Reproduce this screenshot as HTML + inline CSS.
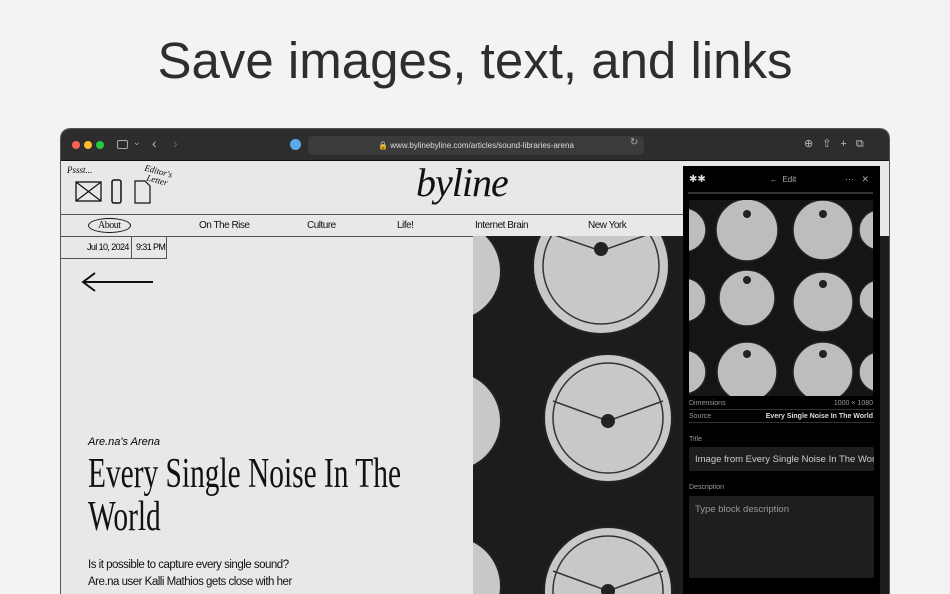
<!DOCTYPE html>
<html><head><meta charset="utf-8"><style>
*{margin:0;padding:0;box-sizing:border-box}
body{width:950px;height:594px;overflow:hidden;background:#f3f3f3;font-family:"Liberation Sans",sans-serif;position:relative}
.abs{position:absolute}
h1{position:absolute;top:31px;left:0;width:950px;text-align:center;font-weight:400;font-size:51px;color:#2e2e2e}
.win{left:61px;top:129px;width:828px;height:465px;background:#e8e8e8;border-radius:9px 9px 0 0;overflow:hidden;box-shadow:0 0 0 1px #555}
.bar{left:0;top:0;width:828px;height:32px;background:#2d2d2d;border-bottom:1px solid #111}
.dot{width:8px;height:8px;border-radius:50%;top:12px}
.url{left:247px;top:7px;width:336px;height:19px;background:#3b3b3b;border-radius:5px;color:#ddd;font-size:8px;text-align:center;line-height:19px}
.nav{top:85px;left:0;width:622px;height:23px;border-top:1px solid #555;border-bottom:1px solid #555;font-size:10px;letter-spacing:-.5px;color:#111}
.nav span{position:absolute;top:5px}
.panel{left:622px;top:37px;width:197px;height:428px;background:#000;color:#ccc}
.lbl{font-size:7px;color:#999}
</style></head><body>
<h1>Save images, text, and links</h1>
<div class="abs win">
 <div class="abs bar">
  <div class="abs dot" style="left:11px;background:#fe5f57"></div>
  <div class="abs dot" style="left:23px;background:#febc2e"></div>
  <div class="abs dot" style="left:35px;background:#28c840"></div>
  <div class="abs" style="left:56px;top:11px;width:11px;height:9px;border:1px solid #aaa;border-radius:2px"></div>
  <div class="abs" style="left:72px;top:8px;color:#aaa;font-size:9px">⌄</div>
  <div class="abs" style="left:91px;top:6px;color:#bbb;font-size:14px">‹</div>
  <div class="abs" style="left:112px;top:6px;color:#666;font-size:14px">›</div>
  <div class="abs" style="left:229px;top:10px;width:11px;height:11px;border-radius:50%;background:#5aa9ea"></div>
  <div class="abs url">🔒 www.bylinebyline.com/articles/sound-libraries-arena</div>
  <div class="abs" style="left:569px;top:8px;color:#aaa;font-size:10px">↻</div>
  <div class="abs" style="left:743px;top:8px;color:#bbb;font-size:11px;letter-spacing:9px">⊕⇧+⧉</div>
 </div>
 <div class="abs" style="left:6px;top:36px;font-size:9px;font-style:italic;font-family:'Liberation Serif',serif">Pssst...</div>
 <div class="abs" style="left:82px;top:38px;font-size:9px;font-style:italic;font-family:'Liberation Serif',serif;transform:rotate(15deg);line-height:9px">Editor's<br>&nbsp;&nbsp;Letter</div>
 <svg class="abs" style="left:14px;top:50px" width="100" height="26"><rect x="1" y="3" width="25" height="19" fill="none" stroke="#111" stroke-width="1.3"/><path d="M1 3 L26 22 M26 3 L1 22" stroke="#111" stroke-width="1.2"/><rect x="37" y="1" width="9" height="23" rx="2" fill="none" stroke="#111" stroke-width="1.5"/><path d="M60 2 h10 l5 5 v17 h-15 z" fill="none" stroke="#111" stroke-width="1.2"/></svg>
 <div class="abs" style="left:355px;top:30px;font-size:40px;font-style:italic;font-family:'Liberation Serif',serif;letter-spacing:-1px;color:#111">byline</div>
 <div class="abs nav">
  <span style="left:27px;top:3px;border:1px solid #111;border-radius:50%;padding:1px 9px;font-family:'Liberation Serif',serif">About</span>
  <span style="left:138px">On The Rise</span><span style="left:246px">Culture</span><span style="left:336px">Life!</span><span style="left:414px">Internet Brain</span><span style="left:527px">New York</span>
 </div>
 <div class="abs" style="left:0;top:108px;width:106px;height:22px;border-bottom:1px solid #555;border-right:1px solid #555;font-size:9px;letter-spacing:-.6px;white-space:nowrap">
  <span class="abs" style="left:26px;top:5px">Jul 10, 2024</span><span class="abs" style="left:70px;top:0;width:1px;height:22px;background:#555"></span><span class="abs" style="left:75px;top:5px">9:31 PM</span></div>
 <svg class="abs" style="left:20px;top:142px" width="75" height="22"><path d="M2 11 H72 M14 2 L2 11 L14 20" fill="none" stroke="#111" stroke-width="2"/></svg>
 <div class="abs" style="left:27px;top:307px;font-size:11px;font-style:italic">Are.na's Arena</div>
 <div class="abs" style="left:27px;top:324px;font-size:42px;line-height:43px;font-family:'Liberation Serif',serif;transform:scaleX(.7);transform-origin:0 0;width:560px;color:#111">Every Single Noise In The World</div>
 <div class="abs" style="left:27px;top:428px;font-size:11.5px;line-height:17px;letter-spacing:-.5px;color:#111">Is it possible to capture every single sound?<br>Are.na user Kalli Mathios gets close with her</div>
 <svg class="abs" style="left:412px;top:107px" width="416" height="358">
  <rect width="416" height="358" fill="#1c1c1c"/>
  <g fill="#c8c8c8" stroke="#222" stroke-width="2">
   <circle cx="-22" cy="35" r="50"/><circle cx="-22" cy="185" r="50"/><circle cx="-22" cy="350" r="50"/>
   <circle cx="128" cy="30" r="68"/><circle cx="135" cy="182" r="64"/><circle cx="135" cy="355" r="64"/>
   <circle cx="330" cy="60" r="60"/><circle cx="330" cy="220" r="60"/>
  </g>
  <g stroke="#333" stroke-width="1.5" fill="none"><circle cx="128" cy="30" r="58"/><circle cx="135" cy="182" r="55"/><circle cx="135" cy="355" r="55"/><path d="M70 -5 L128 15 L185 -5 M80 165 L135 185 L190 165 M80 335 L135 355 L190 335"/></g>
  <g fill="#222"><circle cx="128" cy="13" r="7"/><circle cx="135" cy="185" r="7"/><circle cx="135" cy="355" r="7"/></g>
 </svg>
 <div class="abs panel">
  <div class="abs" style="left:6px;top:8px;font-size:10px;color:#ddd">✱✱</div>
  <div class="abs" style="left:87px;top:9px;font-size:8px;color:#aaa">←&nbsp; Edit</div>
  <div class="abs" style="left:162px;top:8px;font-size:9px;color:#aaa">···&nbsp;&nbsp; ✕</div>
  <div class="abs" style="left:5px;top:26px;width:185px;height:2px;background:#333"></div>
  <svg class="abs" style="left:6px;top:34px" width="184" height="196">
   <rect width="184" height="196" fill="#151515"/>
   <g fill="#bdbdbd" stroke="#222" stroke-width="1.5">
    <circle cx="-5" cy="30" r="22"/><circle cx="-5" cy="100" r="22"/><circle cx="-5" cy="172" r="22"/>
    <circle cx="58" cy="30" r="31"/><circle cx="134" cy="30" r="30"/>
    <circle cx="58" cy="98" r="28"/><circle cx="134" cy="102" r="30"/>
    <circle cx="58" cy="172" r="30"/><circle cx="134" cy="172" r="30"/>
    <circle cx="190" cy="30" r="20"/><circle cx="190" cy="100" r="20"/><circle cx="190" cy="172" r="20"/>
   </g>
   <g fill="#222"><circle cx="58" cy="14" r="4"/><circle cx="134" cy="14" r="4"/><circle cx="58" cy="80" r="4"/><circle cx="134" cy="84" r="4"/><circle cx="58" cy="154" r="4"/><circle cx="134" cy="154" r="4"/></g>
  </svg>
  <div class="abs lbl" style="left:6px;top:234px">Dimensions</div><div class="abs lbl" style="right:7px;top:234px">1000 × 1080</div>
  <div class="abs" style="left:6px;top:243px;width:185px;height:1px;background:#333"></div>
  <div class="abs lbl" style="left:6px;top:247px">Source</div><div class="abs" style="right:7px;top:247px;font-size:7px;font-weight:bold;color:#ddd">Every Single Noise In The World</div>
  <div class="abs" style="left:6px;top:256px;width:185px;height:1px;background:#333"></div>
  <div class="abs lbl" style="left:6px;top:270px">Title</div>
  <div class="abs" style="left:6px;top:281px;width:185px;height:24px;background:#1e1e1e;border-radius:2px;font-size:9.5px;color:#ccc;padding:7px 6px;white-space:nowrap;overflow:hidden">Image from Every Single Noise In The Worl</div>
  <div class="abs lbl" style="left:6px;top:318px">Description</div>
  <div class="abs" style="left:6px;top:330px;width:185px;height:82px;background:#1e1e1e;border-radius:2px;font-size:9.5px;color:#999;padding:8px 6px">Type block description</div>
 </div>
</div>
</body></html>
